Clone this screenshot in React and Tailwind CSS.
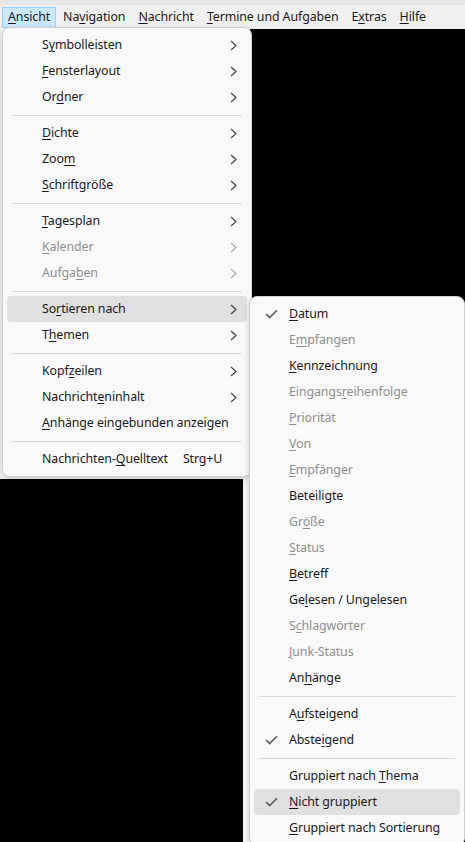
import React from 'react'

const MENUBAR = [
  { t: '&Ansicht', active: true },
  { t: 'Na&vigation' },
  { t: '&Nachricht' },
  { t: '&Termine und Aufgaben' },
  { t: 'E&xtras' },
  { t: '&Hilfe' },
]

const MAIN = [
  { t: 'S&ymbolleisten', sub: true },
  { t: '&Fensterlayout', sub: true },
  { t: 'Or&dner', sub: true },
  { sep: true },
  { t: '&Dichte', sub: true },
  { t: 'Zoo&m', sub: true },
  { t: '&Schriftgröße', sub: true },
  { sep: true },
  { t: '&Tagesplan', sub: true },
  { t: '&Kalender', sub: true, off: true },
  { t: 'Aufga&ben', sub: true, off: true },
  { sep: true },
  { t: 'So&rtieren nach', sub: true, hover: true },
  { t: 'T&hemen', sub: true },
  { sep: true },
  { t: 'Kopf&zeilen', sub: true },
  { t: 'Nachricht&eninhalt', sub: true },
  { t: '&Anhänge eingebunden anzeigen' },
  { sep: true },
  { t: 'Nachrichten-&Quelltext', key: 'Strg+U' },
]

const SORT = [
  { t: '&Datum', check: true },
  { t: 'E&mpfangen', off: true },
  { t: '&Kennzeichnung' },
  { t: 'Eingangs&reihenfolge', off: true },
  { t: '&Priorität', off: true },
  { t: '&Von', off: true },
  { t: '&Empfänger', off: true },
  { t: 'Beteiligte' },
  { t: 'Gr&öße', off: true },
  { t: '&Status', off: true },
  { t: '&Betreff' },
  { t: 'Ge&lesen / Ungelesen' },
  { t: 'S&chlagwörter', off: true },
  { t: '&Junk-Status', off: true },
  { t: 'An&hänge' },
  { sep: true },
  { t: 'A&ufsteigend' },
  { t: 'Abste&igend', check: true },
  { sep: true },
  { t: 'Gruppiert nach &Thema' },
  { t: '&Nicht gruppiert', check: true, hover: true },
  { t: '&Gruppiert nach Sortierung' },
]

function Label({ t }) {
  const i = t.indexOf('&')
  if (i < 0) return <span>{t}</span>
  return (
    <span>
      {t.slice(0, i)}
      <span className="underline underline-offset-2 decoration-1">{t[i + 1]}</span>
      {t.slice(i + 2)}
    </span>
  )
}

function Chevron({ off }) {
  return (
    <svg width="7" height="11" viewBox="0 0 7 11" fill="none">
      <path d="M1 1 L6 5.5 L1 10" stroke={off ? '#a6a6a6' : '#3c3c3c'} strokeWidth="1.1" />
    </svg>
  )
}

function Check() {
  return (
    <svg width="13" height="10" viewBox="0 0 13 10" fill="none">
      <path d="M1 5 L4.6 8.6 L12 1.2" stroke="#5a5a5a" strokeWidth="1.6" />
    </svg>
  )
}

function Separator() {
  return (
    <div className="h-[10px] flex items-center px-[5px]">
      <div className="h-px w-full bg-[#d9d9d9]" />
    </div>
  )
}

function MenuItem({ item }) {
  return (
    <div
      className={`h-[26px] flex items-center rounded-[4px] pr-[10px] ${item.hover ? 'bg-[#e0e0e0]' : ''} ${item.off ? 'text-[#8f8f8f]' : 'text-[#1a1a1a]'}`}
    >
      <div className="w-[35px] flex items-center justify-center shrink-0">
        {item.check && <Check />}
      </div>
      <div className="flex-1 whitespace-nowrap">
        <Label t={item.t} />
        {item.key && <span className="ml-[15px]">{item.key}</span>}
      </div>
      {item.sub && <Chevron off={item.off} />}
    </div>
  )
}

export default function App() {
  return (
    <div className="relative w-[465px] h-[842px] overflow-hidden bg-black font-['Noto_Sans',sans-serif] text-[12.4px] tracking-[-0.1px] leading-none">
      {/* menubar */}
      <div className="h-[29px] bg-[#f0f0f0] border-t-[5px] border-[#e6e6e6] flex items-center pl-[2px] text-[#1a1a1a]">
        {MENUBAR.map((m, i) => (
          <div
            key={i}
            className={`h-[21px] flex items-center px-[5px] mr-[1px] border ${m.active ? 'bg-[#cce8ff] border-[#99d1ff]' : 'border-transparent'}`}
          >
            <Label t={m.t} />
          </div>
        ))}
      </div>

      {/* app body behind the menus */}
      <div className="flex h-[813px]">
        <div className="w-[243px] flex flex-col">
          <div className="h-[450px] bg-[#f3f3f3]" />
          <div className="flex-1 bg-black" />
        </div>
        <div className="w-[7px] bg-[#f7f7f7]" />
        <div className="flex-1 bg-black" />
      </div>

      {/* Ansicht menu */}
      <div className="absolute left-[2px] top-[27px] w-[250px] bg-[#f9f9f9] border border-[#cfcfcf] rounded-[8px] shadow-[0_2px_6px_rgba(0,0,0,0.18)] p-[4px]">
        {MAIN.map((it, i) => (it.sep ? <Separator key={i} /> : <MenuItem key={i} item={it} />))}
      </div>

      {/* Sortieren nach submenu */}
      <div className="absolute left-[249px] top-[296px] w-[216px] bg-[#f9f9f9] border border-[#cfcfcf] rounded-[8px] shadow-[0_2px_6px_rgba(0,0,0,0.18)] p-[4px]">
        {SORT.map((it, i) => (it.sep ? <Separator key={i} /> : <MenuItem key={i} item={it} />))}
      </div>
    </div>
  )
}
